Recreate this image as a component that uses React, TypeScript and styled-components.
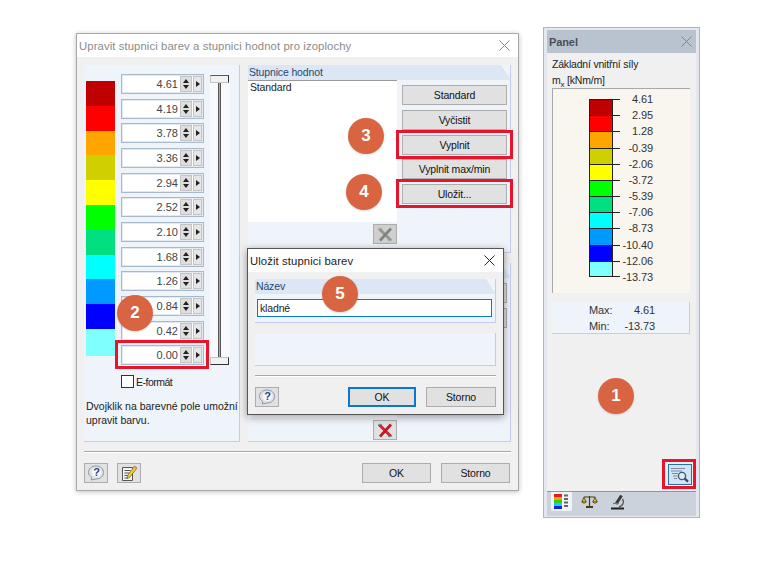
import React from 'react';
import styled, { createGlobalStyle } from 'styled-components';

const Global = createGlobalStyle`
  html, body { margin: 0; padding: 0; background: #fff; }
  * { box-sizing: border-box; }
  body { font-family: "Liberation Sans", Arial, sans-serif; font-size: 10.5px; letter-spacing: -0.15px; color: #222; }
`;

const Stage = styled.div`
  position: relative;
  width: 760px;
  height: 573px;
  padding: 27px 0 0 76px;
  display: flex;
  align-items: flex-start;
  overflow: hidden;
`;

const Badge = styled.div<{ $x: number; $y: number }>`
  position: absolute;
  left: ${(p) => p.$x - 18}px;
  top: ${(p) => p.$y - 18}px;
  width: 36px;
  height: 36px;
  border-radius: 50%;
  background: #d96442;
  color: #fff;
  font-size: 17px;
  font-weight: bold;
  letter-spacing: 0;
  display: flex;
  align-items: center;
  justify-content: center;
  z-index: 5;
  box-shadow: 0 1px 2px rgba(0, 0, 0, 0.15);
`;

const Marked = styled.div<{ $right?: number }>`
  position: relative;
  display: flex;
  &::after {
    content: '';
    position: absolute;
    inset: -5px ${(p) => p.$right ?? -5}px -4px -6px;
    border: 3px solid #e8142c;
    z-index: 4;
    pointer-events: none;
  }
`;

const Window = styled.div`
  position: relative;
  width: 443px;
  height: 458px;
  margin-top: 6px;
  background: #f0f0f0;
  border: 1px solid #a8a8a8;
  box-shadow: 0 1px 5px rgba(0, 0, 0, 0.25);
  display: flex;
  flex-direction: column;
`;

const TitleBar = styled.div<{ $active?: boolean }>`
  height: 23px;
  flex: none;
  background: #fff;
  padding: 0 8px 0 2px;
  display: flex;
  align-items: center;
  justify-content: space-between;
  color: ${(p) => (p.$active ? '#1c1c1c' : '#8b8b8b')};
  font-size: 11.3px;
  letter-spacing: 0.1px;
`;

const CloseIcon = ({ color }: { color: string }) => (
  <svg width="11" height="11" viewBox="0 0 11 11">
    <path d="M0.5 0.5 L10.5 10.5 M10.5 0.5 L0.5 10.5" stroke={color} strokeWidth="1" fill="none" />
  </svg>
);

const Body = styled.div`
  flex: 1;
  padding: 8px 7px 0;
  display: flex;
  flex-direction: column;
`;

const Columns = styled.div`
  height: 377px;
  display: grid;
  grid-template-columns: 156px 263px;
  gap: 8px;
`;

const Group = styled.div`
  background: #eff3fa;
  border-right: 1px solid #c6cbee;
  border-bottom: 1px solid #c6cbee;
`;

const LeftGroup = styled(Group)`
  padding: 9px 0 0 2px;
  display: flex;
  flex-direction: column;
`;

const Scale = styled.div`
  display: grid;
  grid-template-columns: 29px 83px 20px;
  column-gap: 6px;
`;

const Swatches = styled.div`
  margin-top: 7px;
  height: 275px;
  display: flex;
  flex-direction: column;
`;

const Swatch = styled.div<{ $color: string; $tall?: boolean }>`
  background: ${(p) => p.$color};
  height: ${(p) => (p.$tall ? 27 : 24.8)}px;
`;

const Fields = styled.div`
  display: flex;
  flex-direction: column;
  gap: 4.67px;
`;

const Field = styled.div`
  width: 83px;
  height: 20px;
  background: #fff;
  border: 1px solid #a7b9cd;
  box-shadow: inset 0 0 0 1px #e3e9f1;
  display: flex;
  align-items: center;
  padding-right: 1px;
  color: #444;
  font-size: 11px;
  letter-spacing: 0;
`;

const FieldValue = styled.span`
  flex: 1;
  text-align: right;
  padding-right: 2px;
`;

const Spin = styled.div`
  width: 12px;
  height: 16px;
  background: #dedede;
  border: 1px solid #c4c4c4;
  display: flex;
  flex-direction: column;
  align-items: center;
  justify-content: center;
  gap: 2px;
`;

const Tri = styled.i<{ $dir: 'up' | 'down' | 'right' }>`
  display: block;
  width: 0;
  height: 0;
  border-style: solid;
  border-color: transparent;
  ${(p) =>
    p.$dir === 'up'
      ? 'border-width: 0 3.5px 4px; border-bottom-color: #222;'
      : p.$dir === 'down'
        ? 'border-width: 4px 3.5px 0; border-top-color: #222;'
        : 'border-width: 3px 0 3px 4px; border-left-color: #222;'}
`;

const Next = styled.div`
  width: 9px;
  height: 16px;
  margin-left: 1px;
  background: #e6e6e6;
  border: 1px solid #c4c4c4;
  display: flex;
  align-items: center;
  justify-content: center;
`;

const Rail = styled.div`
  height: 291px;
  background: #f7f9fc;
  padding-top: 1px;
  display: flex;
  flex-direction: column;
  align-items: flex-start;
`;

const Thumb = styled.div`
  flex: none;
  width: 19px;
  height: 8px;
  background: #f1f1f1;
  border: 1px solid #c4c4c4;
  border-right: 1px solid #333;
  border-top-color: #555;
`;

const ThumbLow = styled(Thumb)`
  border-top-color: #c4c4c4;
  border-bottom-color: #333;
`;

const Track = styled.div`
  flex: 1;
  width: 3px;
  margin-left: 8px;
  background: #aaa;
  border-left: 1px solid #555;
  border-right: 1px solid #555;
`;

const CheckRow = styled.div`
  margin: 10px 0 0 35px;
  display: flex;
  align-items: center;
  gap: 2px;
  height: 13px;
  letter-spacing: -0.5px;
`;

const CheckBox = styled.span`
  width: 13px;
  height: 13px;
  background: #fff;
  border: 1px solid #333;
`;

const Note = styled.div`
  margin-top: 11px;
  line-height: 14px;
  white-space: nowrap;
  letter-spacing: 0;
`;

const RightColumn = styled.div`
  display: flex;
  flex-direction: column;
  gap: 10px;
`;

const ValuesGroup = styled(Group)<{ $grow?: boolean }>`
  ${(p) => (p.$grow ? 'flex: 1;' : 'height: 188px; flex: none;')}
  display: flex;
  flex-direction: column;
`;

const GroupHead = styled.div`
  height: 15px;
  flex: none;
  margin-right: -1px;
  background: #dce6f4;
  clip-path: polygon(0 0, calc(100% - 10px) 0, 100% 100%, 0 100%);
  padding-left: 1px;
  line-height: 15px;
  color: #27486f;
`;

const ValuesBody = styled.div`
  flex: 1;
  display: grid;
  grid-template-columns: 149px 1fr;
`;

const ListSide = styled.div`
  display: flex;
  flex-direction: column;
`;

const List = styled.div<{ $height: number }>`
  height: ${(p) => p.$height}px;
  background: #fff;
  border-top: 1px solid #9a9a9a;
  padding: 0 2px;
  line-height: 13px;
`;

const ListTools = styled.div`
  flex: 1;
  padding-top: 2px;
  display: flex;
  justify-content: flex-end;
  align-items: flex-start;
`;

const ButtonSide = styled.div`
  padding: 5px 3px 0 5px;
  display: flex;
  flex-direction: column;
  gap: 4.8px;
`;

const Button = styled.div<{ $width?: number; $default?: boolean }>`
  height: 20px;
  flex: none;
  width: ${(p) => (p.$width ? `${p.$width}px` : '100%')};
  background: #e1e1e1;
  border: ${(p) => (p.$default ? '2px solid #0a78d2' : '1px solid #adadad')};
  display: flex;
  align-items: center;
  justify-content: center;
  color: #111;
`;

const IconButton = styled.div<{ $off?: boolean }>`
  width: 24px;
  height: 20px;
  flex: none;
  background: ${(p) => (p.$off ? '#cfcfcf' : '#e1e1e1')};
  border: 1px solid #adadad;
  display: flex;
  align-items: center;
  justify-content: center;
`;

const Separator = styled.div<{ $top: number }>`
  height: 2px;
  flex: none;
  margin-top: ${(p) => p.$top}px;
  background: #a8a8a8;
  border-bottom: 1px solid #fff;
`;

const Footer = styled.div`
  margin-top: 10px;
  padding-right: 1px;
  display: flex;
  align-items: center;
  gap: 10px;
`;

const IconRow = styled.div`
  display: flex;
  gap: 9px;
`;

const Spacer = styled.div`
  flex: 1;
`;

const SaveDialog = styled.div`
  position: absolute;
  left: 170px;
  top: 214px;
  width: 257px;
  height: 167px;
  background: #f0f0f0;
  border: 1px solid #555;
  box-shadow: 0 2px 8px rgba(0, 0, 0, 0.4);
  display: flex;
  flex-direction: column;
  z-index: 3;
`;

const SaveBody = styled.div`
  flex: 1;
  padding: 7px 7px 0;
  display: flex;
  flex-direction: column;
`;

const NameBody = styled.div`
  padding: 5px 3px 5px 2px;
`;

const NameInput = styled.div`
  height: 18px;
  background: #fff;
  border: 1px solid #0a78d2;
  padding-left: 2px;
  line-height: 16px;
  color: #222;
`;

const EmptyGroup = styled(Group)`
  height: 33px;
  margin-top: 10px;
  flex: none;
`;

const SaveFooter = styled(Footer)`
  padding-right: 0;
`;

const Panel = styled.div`
  width: 157px;
  height: 491px;
  margin-left: 24px;
  background: #e4e8ee;
  border: 1px solid #b4b4b4;
  padding: 2px 3px 1px;
  display: flex;
  flex-direction: column;
`;

const PanelTitle = styled.div`
  height: 23px;
  flex: none;
  background: #b9c3cf;
  padding: 0 4px 0 2px;
  display: flex;
  align-items: center;
  justify-content: space-between;
  font-weight: bold;
  color: #4a4f57;
  font-size: 11px;
  letter-spacing: -0.1px;
`;

const PanelBody = styled.div`
  flex: 1;
  background: #f0f0f0;
  border-bottom: 1px solid #8d959e;
  padding: 3px 5px 0;
  display: flex;
  flex-direction: column;
`;

const PanelLine = styled.div`
  height: 16px;
  line-height: 16px;
  letter-spacing: -0.2px;
  sub { font-size: 8px; line-height: 0; }
`;

const Legend = styled.div`
  height: 205px;
  margin: 0 1px 0 0;
  background: #f9f6f0;
  border-top: 1px solid #a8a8a8;
  border-left: 1px solid #a8a8a8;
  padding-left: 36px;
  display: flex;
`;

const LegendBar = styled.div`
  position: relative;
  width: 31px;
  padding: 10px 7px 0 0;
`;

const BarStep = styled.div<{ $color: string }>`
  position: relative;
  height: 16.18px;
  background: ${(p) => p.$color};
  border: 1px solid #222;
  border-bottom: 0;
  &::after {
    content: '';
    position: absolute;
    right: -8px;
    top: -1px;
    width: 7px;
    height: 1px;
    background: #222;
  }
  &:last-child {
    border-bottom: 1px solid #222;
  }
  &:last-child::before {
    content: '';
    position: absolute;
    right: -8px;
    bottom: -1px;
    width: 7px;
    height: 1px;
    background: #222;
  }
`;

const LegendLabels = styled.div`
  width: 33px;
  padding-top: 2px;
  font-size: 11px;
  letter-spacing: -0.1px;
`;

const LegendLabel = styled.div`
  height: 16.18px;
  line-height: 16.18px;
  text-align: right;
  white-space: nowrap;
  color: #333;
`;

const Extremes = styled(Group)`
  height: 32px;
  margin: 9px 1px 0 0;
  padding: 0 34px 0 37px;
  display: grid;
  grid-template-columns: 1fr auto;
  grid-auto-rows: 16px;
  line-height: 16px;
  color: #333;
  font-size: 11px;
  letter-spacing: -0.1px;
`;

const ExtremeValue = styled.span`
  text-align: right;
`;

const LookupWrap = styled.div`
  margin: auto -1px 6px 0;
  align-self: flex-end;
  width: 24px;
`;

const Lookup = styled.div`
  width: 24px;
  height: 21px;
  background: #cfe5f8;
  border: 1px solid #2a6ea6;
  display: flex;
  align-items: center;
  justify-content: center;
`;

const TabStrip = styled.div`
  height: 24px;
  flex: none;
  background: #cbd2db;
  padding-left: 4px;
  display: flex;
  align-items: flex-start;
`;

const Tab = styled.div<{ $active?: boolean }>`
  width: 21px;
  height: 19px;
  margin-right: 7px;
  display: flex;
  align-items: center;
  justify-content: center;
  ${(p) => p.$active && 'background: #f1f3f6; border-radius: 0 0 2px 2px;'}
`;

const HelpIcon = () => (
  <svg width="18" height="16" viewBox="0 0 18 16">
    <path d="M9 1 C13.5 1 16.5 3.8 16.5 7.5 C16.5 11.2 13.5 14 9 14 L4 15 L5 12.6 C2.9 11.4 1.5 9.6 1.5 7.5 C1.5 3.8 4.5 1 9 1 Z" fill="#dfe3ea" stroke="#8d96a6" />
    <circle cx="9.5" cy="7.5" r="4.6" fill="#f7f8fb" />
    <text x="9.6" y="11.4" textAnchor="middle" fontSize="11" fontWeight="bold" fontFamily="Liberation Sans" fill="#2c3f86">?</text>
  </svg>
);

const NoteIcon = () => (
  <svg width="18" height="17" viewBox="0 0 18 17">
    <path d="M2.5 2.5 H12.5 V15.5 H2.5 Z" fill="#f3f3f3" stroke="#555" />
    <path d="M4.5 5.5 H10.5 M4.5 8 H9.5 M4.5 10.5 H8.5 M4.5 13 H8" stroke="#555" />
    <path d="M14.5 1 L17 3 L10 12 L7.3 13.5 L7.8 10.3 Z" fill="#f3cf33" stroke="#6f5a10" strokeWidth="0.7" />
    <path d="M14.5 1 L17 3 L16 4.3 L13.4 2.3 Z" fill="#e58aa0" />
  </svg>
);

const CrossIcon = ({ off }: { off?: boolean }) => (
  <svg width="16" height="15" viewBox="0 0 16 15">
    <path d="M2 1.5 L14 13.5" stroke={off ? '#8f9694' : '#d3222c'} strokeWidth="3" />
    <path d="M14 1.5 L3 13.5" stroke={off ? '#7d8482' : '#b81a28'} strokeWidth="2.6" />
    <path d="M1.5 1.5 L5 1.5 M11 13.5 L14.5 13.5" stroke={off ? '#a7acab' : '#7e8ea8'} strokeWidth="1" />
  </svg>
);

const LookupIcon = () => (
  <svg width="20" height="17" viewBox="0 0 20 17">
    <path d="M1 2.5 H15 M1 5 H12 M2 7.5 H8 M3 10 H7 M4 12.5 H7" stroke="#7d8a9c" strokeWidth="1" />
    <circle cx="12" cy="10" r="3.6" fill="#dcebf7" stroke="#4a5a70" strokeWidth="1.4" />
    <path d="M14.8 12.6 L18 15.6" stroke="#38465a" strokeWidth="2.2" />
  </svg>
);

const BarsIcon = () => (
  <svg width="17" height="16" viewBox="0 0 17 16">
    <rect x="1" y="0" width="8" height="3" fill="#e21b1b" />
    <rect x="1" y="3" width="8" height="3" fill="#f5a400" />
    <rect x="1" y="6" width="8" height="3" fill="#34c92c" />
    <rect x="1" y="9" width="8" height="3" fill="#10d5e0" />
    <rect x="1" y="12" width="8" height="3" fill="#1420e0" />
    <path d="M11 1.5 H15 M11 5 H15 M11 8.5 H15 M11 12 H15" stroke="#666" strokeWidth="2" />
  </svg>
);

const ScalesIcon = () => (
  <svg width="17" height="15" viewBox="0 0 17 15">
    <path d="M8.5 2 V12 M3 3 H14" stroke="#4a3c10" strokeWidth="1.2" />
    <path d="M3 3 L0.8 8 H5.2 Z M14 3 L11.8 8 H16.2 Z" fill="#e0b93c" stroke="#4a3c10" strokeWidth="0.8" />
    <path d="M0.8 8 Q3 10.5 5.2 8 M11.8 8 Q14 10.5 16.2 8" fill="#c99d22" stroke="#4a3c10" strokeWidth="0.8" />
    <path d="M5 13 H12" stroke="#4a3c10" strokeWidth="2" />
  </svg>
);

const MicroscopeIcon = () => (
  <svg width="15" height="16" viewBox="0 0 15 16">
    <path d="M6 10 L11.5 1.5" stroke="#3a3a3a" strokeWidth="3" />
    <path d="M12.5 5 C14.5 8 13 12 9 13" stroke="#555" strokeWidth="1.4" fill="none" />
    <path d="M3 9.5 H9" stroke="#777" strokeWidth="1.2" />
    <path d="M1 14.5 H14" stroke="#222" strokeWidth="2" />
  </svg>
);

const fieldValues = ['4.61', '4.19', '3.78', '3.36', '2.94', '2.52', '2.10', '1.68', '1.26', '0.84', '0.42', '0.00'];
const colors = ['#c00000', '#ff0000', '#ffa500', '#d0d000', '#ffff00', '#00ff00', '#00e080', '#00ffff', '#0099ff', '#0000ff', '#80ffff'];
const legendValues = ['4.61', '2.95', '1.28', '-0.39', '-2.06', '-3.72', '-5.39', '-7.06', '-8.73', '-10.40', '-12.06', '-13.73'];

const ValueField = ({ value }: { value: string }) => (
  <Field>
    <FieldValue>{value}</FieldValue>
    <Spin>
      <Tri $dir="up" />
      <Tri $dir="down" />
    </Spin>
    <Next>
      <Tri $dir="right" />
    </Next>
  </Field>
);

export default function App() {
  return (
    <Stage>
      <Global />
      <Window>
        <TitleBar>
          <span>Upravit stupnici barev a stupnici hodnot pro izoplochy</span>
          <CloseIcon color="#8b8b8b" />
        </TitleBar>
        <Body>
          <Columns>
            <LeftGroup>
              <Scale>
                <Swatches>
                  {colors.map((c, i) => (
                    <Swatch key={c} $color={c} $tall={i === colors.length - 1} />
                  ))}
                </Swatches>
                <Fields>
                  {fieldValues.map((v, i) =>
                    i === fieldValues.length - 1 ? (
                      <Marked key={v}>
                        <ValueField value={v} />
                      </Marked>
                    ) : (
                      <ValueField key={v} value={v} />
                    ),
                  )}
                </Fields>
                <Rail>
                  <Thumb />
                  <Track />
                  <ThumbLow />
                </Rail>
              </Scale>
              <CheckRow>
                <CheckBox />
                <span>E-formát</span>
              </CheckRow>
              <Note>
                Dvojklik na barevné pole umožní
                <br />
                upravit barvu.
              </Note>
            </LeftGroup>
            <RightColumn>
              <ValuesGroup>
                <GroupHead>Stupnice hodnot</GroupHead>
                <ValuesBody>
                  <ListSide>
                    <List $height={142}>Standard</List>
                    <ListTools>
                      <IconButton $off>
                        <CrossIcon off />
                      </IconButton>
                    </ListTools>
                  </ListSide>
                  <ButtonSide>
                    <Button>Standard</Button>
                    <Button>Vyčistit</Button>
                    <Marked $right={-6}>
                      <Button>Vyplnit</Button>
                    </Marked>
                    <Button>Vyplnit max/min</Button>
                    <Marked $right={-6}>
                      <Button>Uložit...</Button>
                    </Marked>
                  </ButtonSide>
                </ValuesBody>
              </ValuesGroup>
              <ValuesGroup $grow>
                <GroupHead />
                <ValuesBody>
                  <ListSide>
                    <List $height={140} />
                    <ListTools>
                      <IconButton>
                        <CrossIcon />
                      </IconButton>
                    </ListTools>
                  </ListSide>
                  <ButtonSide>
                    <Button />
                    <Button />
                  </ButtonSide>
                </ValuesBody>
              </ValuesGroup>
            </RightColumn>
          </Columns>
          <Separator $top={9} />
          <Footer>
            <IconRow>
              <IconButton>
                <HelpIcon />
              </IconButton>
              <IconButton>
                <NoteIcon />
              </IconButton>
            </IconRow>
            <Spacer />
            <Button $width={69}>OK</Button>
            <Button $width={69}>Storno</Button>
          </Footer>
        </Body>
        <SaveDialog>
          <TitleBar $active>
            <span>Uložit stupnici barev</span>
            <CloseIcon color="#222" />
          </TitleBar>
          <SaveBody>
            <Group>
              <GroupHead>Název</GroupHead>
              <NameBody>
                <NameInput>kladné</NameInput>
              </NameBody>
            </Group>
            <EmptyGroup />
            <Separator $top={9} />
            <SaveFooter>
              <IconButton>
                <HelpIcon />
              </IconButton>
              <Spacer />
              <Button $width={68} $default>
                OK
              </Button>
              <Button $width={70}>Storno</Button>
            </SaveFooter>
          </SaveBody>
        </SaveDialog>
      </Window>
      <Panel>
        <PanelTitle>
          <span>Panel</span>
          <CloseIcon color="#7c8590" />
        </PanelTitle>
        <PanelBody>
          <PanelLine>Základní vnitřní síly</PanelLine>
          <PanelLine>
            m<sub>x</sub> [kNm/m]
          </PanelLine>
          <Legend>
            <LegendBar>
              {colors.map((c) => (
                <BarStep key={c} $color={c} />
              ))}
            </LegendBar>
            <LegendLabels>
              {legendValues.map((v) => (
                <LegendLabel key={v}>{v}</LegendLabel>
              ))}
            </LegendLabels>
          </Legend>
          <Extremes>
            <span>Max:</span>
            <ExtremeValue>4.61</ExtremeValue>
            <span>Min:</span>
            <ExtremeValue>-13.73</ExtremeValue>
          </Extremes>
          <LookupWrap>
            <Marked $right={-4}>
              <Lookup>
                <LookupIcon />
              </Lookup>
            </Marked>
          </LookupWrap>
        </PanelBody>
        <TabStrip>
          <Tab $active>
            <BarsIcon />
          </Tab>
          <Tab>
            <ScalesIcon />
          </Tab>
          <Tab>
            <MicroscopeIcon />
          </Tab>
        </TabStrip>
      </Panel>
      <Badge $x={616} $y={396}>1</Badge>
      <Badge $x={135} $y={313}>2</Badge>
      <Badge $x={366} $y={136}>3</Badge>
      <Badge $x={364} $y={192}>4</Badge>
      <Badge $x={340} $y={294}>5</Badge>
    </Stage>
  );
}
